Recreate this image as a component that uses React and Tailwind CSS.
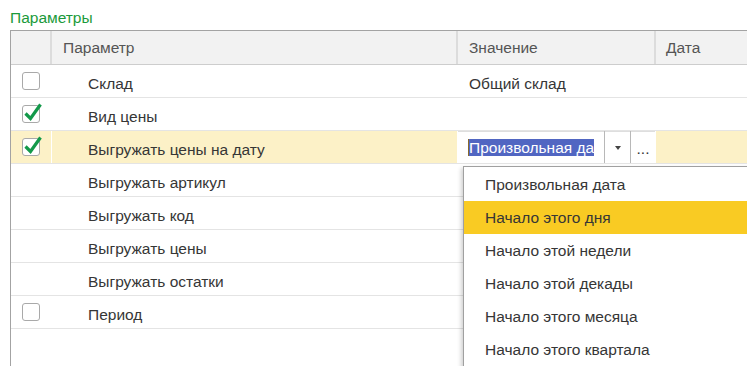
import React from "react";

const rows = [
  { name: "Склад", check: "off", value: "Общий склад" },
  { name: "Вид цены", check: "on" },
  { name: "Выгружать цены на дату", check: "on", active: true },
  { name: "Выгружать артикул" },
  { name: "Выгружать код" },
  { name: "Выгружать цены" },
  { name: "Выгружать остатки" },
  { name: "Период", check: "off" },
];

const options = [
  "Произвольная дата",
  "Начало этого дня",
  "Начало этой недели",
  "Начало этой декады",
  "Начало этого месяца",
  "Начало этого квартала",
];

function CheckBox({ checked }) {
  return (
    <div className="relative h-[18px] w-[18px] rounded-[3px] border border-[#a9a9a9] bg-white">
      {checked && (
        <svg
          className="absolute left-0 top-0 overflow-visible"
          width="18"
          height="18"
          viewBox="0 0 18 18"
        >
          <path
            d="M2.5 7.5 L7.5 12.5 L17.5 -1.5"
            fill="none"
            stroke="#13994a"
            strokeWidth="3.2"
          />
        </svg>
      )}
    </div>
  );
}

function ValueEditor() {
  return (
    <div className="flex h-full w-[198px] items-stretch border-r border-white bg-white shadow-[inset_0_1px_0_#dedede]">
      <div className="flex w-[146px] items-center pl-[10px]">
        <div className="flex h-[17px] overflow-hidden">
          <span className="w-px shrink-0 bg-[#8a6a2a]" />
          <span className="whitespace-nowrap bg-[#5166c2] leading-[17px] text-white">
            Произвольная да
          </span>
        </div>
      </div>
      <div className="flex w-[26px] items-center justify-center border-l border-[#b8b8b8]">
        <span className="mt-[1px] h-0 w-0 border-x-[3px] border-t-[4px] border-x-transparent border-t-[#444]" />
      </div>
      <div className="flex w-[25px] items-center justify-center border-l border-[#b8b8b8] pt-[3px] leading-[17px] text-[#333]">
        ...
      </div>
    </div>
  );
}

function Row({ row }) {
  const bg = row.active ? "bg-[#fcf1c7]" : "bg-white";
  return (
    <div className={`flex h-[33px] border-b border-[#e4e4e4] ${bg}`}>
      <div className="flex w-[41px] shrink-0 items-center border-r border-white pl-[11px]">
        {row.check && <CheckBox checked={row.check === "on"} />}
      </div>
      <div className="flex w-[406px] shrink-0 items-center border-r border-white pl-[36px]">
        <span className="pt-[4px] leading-[17px]">{row.name}</span>
      </div>
      {row.active ? (
        <ValueEditor />
      ) : (
        <div className="flex w-[198px] shrink-0 items-center border-r border-white pl-[11px]">
          <span className="pt-[4px] leading-[17px]">{row.value}</span>
        </div>
      )}
      <div className="flex-1" />
    </div>
  );
}

export default function App() {
  return (
    <div className="relative h-[366px] w-[747px] overflow-hidden bg-white font-['Liberation_Sans',Arial,sans-serif] text-[15.5px] text-[#363636]">
      <div className="h-[30px] pl-[10px] pt-[9px] leading-[17px] text-[#1b9a3b]">Параметры</div>

      <div className="ml-[10px] h-[336px] w-[760px] border-l border-t border-[#a3a3a3]">
        <div className="flex h-[34px] border-b border-[#cdcdcd] bg-[#f2f2f2] leading-[17px] text-[#555]">
          <div className="w-[41px] shrink-0 border-r-2 border-r-[#dcdcdc]" />
          <div className="flex w-[406px] shrink-0 items-center border-r-2 border-r-[#dcdcdc] pl-[11px]">
            Параметр
          </div>
          <div className="flex w-[198px] shrink-0 items-center border-r-2 border-r-[#dcdcdc] pl-[11px]">
            Значение
          </div>
          <div className="flex flex-1 items-center pl-[10px]">Дата</div>
        </div>
        {rows.map((row) => (
          <Row key={row.name} row={row} />
        ))}
      </div>

      <div className="absolute left-[463px] top-[166px] h-[220px] w-[300px] border-l border-t border-[#a0a0a0] bg-white pt-[1px] shadow-[-2px_2px_4px_rgba(0,0,0,0.18)]">
        {options.map((opt, i) => (
          <div
            key={opt}
            className={`flex h-[33px] items-center pl-[21px] leading-[17px] ${
              i === 1 ? "bg-[#f9cb23]" : ""
            }`}
          >
            {opt}
          </div>
        ))}
      </div>
    </div>
  );
}
